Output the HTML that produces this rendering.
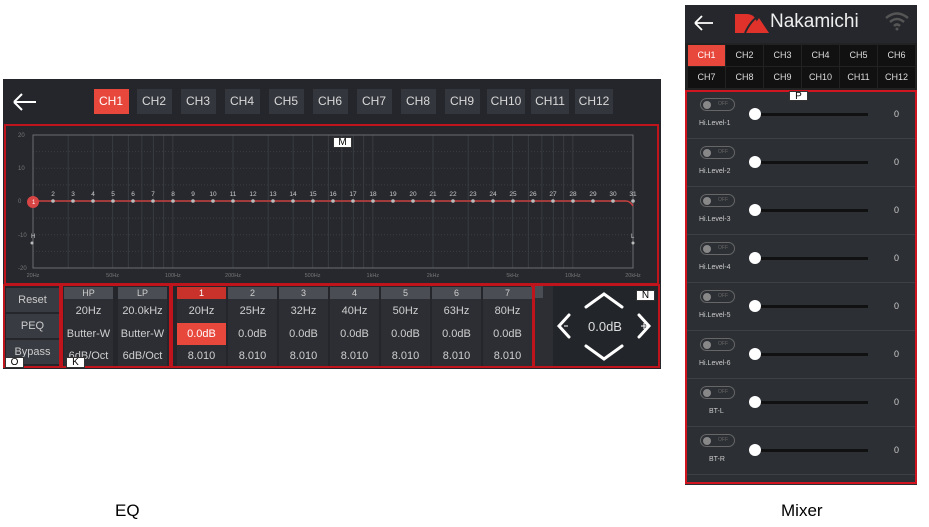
<!DOCTYPE html>
<html><head><meta charset="utf-8">
<style>
*{box-sizing:border-box;margin:0;padding:0}
body{width:929px;height:527px;background:#fff;font-family:"Liberation Sans",sans-serif;position:relative;overflow:hidden}
.a{position:absolute}
.ch{position:absolute;top:89px;height:25px;background:#33363c;color:#d8d8d8;font-size:12px;line-height:25px;text-align:center}
.col{position:absolute;top:287px;width:49px;height:79px;background:#2c2e33}
.col div{position:absolute;left:0;width:49px;text-align:center;color:#cfcfcf;font-size:11px}
.hd{top:0;height:12px;line-height:12px;background:#4a4d53;font-size:9px!important}
.btn{position:absolute;left:6px;width:53px;height:24px;background:#383b41;color:#ccc;font-size:11px;text-align:center;line-height:24px}
.mc{position:absolute;width:37px;height:21px;background:#111;color:#ddd;font-size:9px;text-align:center;line-height:21px}
.lab{position:absolute;background:#fff;color:#000;font-size:10px;line-height:10px;text-align:center;border:1px solid #333}
</style></head><body>
<div class="a" style="left:3px;top:79px;width:658px;height:290px;background:#24262b"></div>
<svg class="a" style="left:10px;top:90px" width="30" height="24"><path d="M4 12H26M4 12L12 4M4 12L12 20" stroke="#fff" stroke-width="2" fill="none"/></svg>
<div id="chs"></div>
<div class="a" style="left:4px;top:124px;width:655px;height:161px;border:2px solid #c0141c;background:#26282d"></div>
<svg class="a" style="left:0;top:124px" width="660" height="161" id="g"></svg>
<div class="a" style="left:3px;top:284px;width:58px;height:84px;border:2px solid #c0141c"></div>
<div class="btn" style="top:288px">Reset</div>
<div class="btn" style="top:314px">PEQ</div>
<div class="btn" style="top:340px">Bypass</div>
<div class="a" style="left:61px;top:284px;width:110px;height:84px;border:2px solid #c0141c"></div>
<div class="a" style="left:171px;top:284px;width:362px;height:84px;border:2px solid #c0141c"></div>
<div class="a" style="left:533px;top:284px;width:127px;height:84px;border:2px solid #c0141c"></div>
<div class="a" style="left:535px;top:286px;width:18px;height:80px;background:#2c2e33"></div>
<div class="a" style="left:535px;top:286px;width:8px;height:12px;background:#4a4d53"></div>
<div class="a" style="left:553px;top:286px;width:105px;height:80px;background:#22252a"></div>
<div id="cols"></div>
<svg class="a" style="left:553px;top:286px" width="105" height="80">
<path d="M33 21L51 8L69 21M33 60L51 73L69 60M16 29L6 40L16 51M86 29L96 40L86 51" stroke="#fff" stroke-width="3" fill="none" stroke-linecap="round"/>
<path d="M11 40h4M88 40h6M91 37v6" stroke="#fff" stroke-width="1"/>
<text x="52" y="45" fill="#ddd" font-size="13" text-anchor="middle" font-family="Liberation Sans">0.0dB</text>
</svg>
<div class="lab" style="left:333px;top:137px;width:19px;height:11px">M</div>
<div class="lab" style="left:636px;top:290px;width:19px;height:11px">N</div>
<div class="lab" style="left:5px;top:357px;width:19px;height:11px">O</div>
<div class="lab" style="left:66px;top:357px;width:19px;height:11px">K</div>
<div class="a" style="left:685px;top:5px;width:232px;height:480px;background:#2c2f34"></div>
<div class="a" style="left:685px;top:5px;width:232px;height:38px;background:#25272c"></div>
<svg class="a" style="left:692px;top:12px" width="24" height="22"><path d="M3 11H21M3 11L10 4M3 11L10 18" stroke="#fff" stroke-width="1.8" fill="none"/></svg>
<svg class="a" style="left:733px;top:12px" width="40" height="22"><path d="M2 21V2H14A10 10 0 0 1 24 12V21Z" fill="#e0322b"/><path d="M16 21L26 6L36 21Z" fill="#e0322b"/><path d="M12 21Q18 8 26 4" stroke="#25272c" stroke-width="2" fill="none"/></svg>
<div class="a" style="left:770px;top:10px;color:#eee;font-size:19px;line-height:24px">Nakamichi</div>
<svg class="a" style="left:884px;top:12px" width="26" height="20"><path d="M2 6Q13 -3 24 6M6 10Q13 4 20 10M10 14Q13 11 16 14" stroke="#555" stroke-width="2.5" fill="none"/><circle cx="13" cy="17" r="1.5" fill="#555"/></svg>
<div class="a" style="left:685px;top:43px;width:232px;height:47px;background:#222"></div>
<div id="mch"></div>
<div class="a" style="left:685px;top:90px;width:232px;height:394px;border:2px solid #d01520"></div>
<div id="rows"></div>
<div class="lab" style="left:789px;top:91px;width:19px;height:10px">P</div>
<div class="a" style="left:115px;top:501px;font-size:17px;color:#000">EQ</div>
<div class="a" style="left:781px;top:501px;font-size:17px;color:#000">Mixer</div>
<script>
var h='';var cx=[111,154,198,242,286,330,374,418,462,506,550,594];
cx.forEach(function(c,i){var w=i>8?38:35;h+='<div class="ch" style="left:'+(c-w/2)+'px;width:'+w+'px;'+(i==0?'background:#e8473c;color:#fff':'')+'">CH'+(i+1)+'</div>'});
document.getElementById('chs').innerHTML=h;
var s='',X0=33,W=600,T=11,B=144;
function fx(f){return X0+200*Math.log10(f/20)}
var fs=[30,40,50,60,70,80,90,100,200,300,400,500,600,700,800,900,1000,2000,3000,4000,5000,6000,7000,8000,9000,10000];
fs.forEach(function(f){var x=fx(f).toFixed(1);s+='<line x1="'+x+'" y1="'+T+'" x2="'+x+'" y2="'+B+'" stroke="#383b40" stroke-width="1"/>'});
for(var k=1;k<8;k++){var y=T+k*(B-T)/8;s+='<line x1="'+X0+'" y1="'+y+'" x2="'+(X0+W)+'" y2="'+y+'" stroke="#3a3d42" stroke-dasharray="1,2"/>'}
s+='<rect x="'+X0+'" y="'+T+'" width="'+W+'" height="'+(B-T)+'" fill="none" stroke="#6a6d72"/>';
[['20',T],['10',T+33],['0',T+66],['-10',T+100],['-20',B]].forEach(function(a){s+='<text x="18" y="'+(a[1]+2)+'" fill="#777" font-size="6">'+a[0]+'</text>'});
[['20Hz',20],['50Hz',50],['100Hz',100],['200Hz',200],['500Hz',500],['1kHz',1000],['2kHz',2000],['5kHz',5000],['10kHz',10000],['20kHz',20000]].forEach(function(a){s+='<text x="'+fx(a[1])+'" y="'+(B+9)+'" fill="#777" font-size="5.5" text-anchor="middle">'+a[0]+'</text>'});
var y0=T+66;
s+='<path d="M33 '+y0+'L626 '+y0+'Q630 '+y0+' 633 '+(y0+5)+'" stroke="#c84040" stroke-width="1.5" fill="none"/>';
for(var i=2;i<=31;i++){var x=33+(i-1)*20;s+='<circle cx="'+x+'" cy="'+y0+'" r="1.8" fill="#bbb"/><text x="'+x+'" y="'+(y0-5)+'" fill="#ccc" font-size="6.5" text-anchor="middle">'+i+'</text>'}
s+='<circle cx="33" cy="'+(y0+1)+'" r="6" fill="#d84545"/><text x="32" y="'+(y0+3)+'" fill="#fff" font-size="6">1</text>';
s+='<text x="31" y="'+(y0+37)+'" fill="#ccc" font-size="6">H</text><circle cx="32" cy="'+(y0+42)+'" r="1.5" fill="#bbb"/>';
s+='<text x="631" y="'+(y0+37)+'" fill="#ccc" font-size="6">L</text><circle cx="633" cy="'+(y0+42)+'" r="1.5" fill="#bbb"/>';
document.getElementById('g').innerHTML=s;
var c='';
function col(x,hd,a,b,d,red){c+='<div class="col" style="left:'+x+'px"><div class="hd" style="'+(red?'background:#c8322a;color:#fff':'')+'">'+hd+'</div><div style="top:13px;line-height:22px">'+a+'</div><div style="top:36px;height:22px;line-height:22px;'+(red?'background:#e8473c;color:#fff':'')+'">'+b+'</div><div style="top:59px;line-height:20px">'+d+'</div></div>'}
col(64,'HP','20Hz','Butter-W','6dB/Oct');col(118,'LP','20.0kHz','Butter-W','6dB/Oct');
['20Hz','25Hz','32Hz','40Hz','50Hz','63Hz','80Hz'].forEach(function(f,i){col(177+i*51,i+1,f,'0.0dB','8.010',i==0)});
document.getElementById('cols').innerHTML=c;
var m='';for(var i=0;i<12;i++){var r=Math.floor(i/6),k=i%6;m+='<div class="mc" style="left:'+(688+k*38)+'px;top:'+(45+r*22)+'px;'+(i==0?'background:#e8473c;color:#fff':'')+'">CH'+(i+1)+'</div>'}
document.getElementById('mch').innerHTML=m;
var L=['Hi.Level-1','Hi.Level-2','Hi.Level-3','Hi.Level-4','Hi.Level-5','Hi.Level-6','BT-L','BT-R'],R='';
L.forEach(function(t,i){var y=92+i*48;R+='<div class="a" style="left:687px;top:'+y+'px;width:228px;height:47px;border-bottom:1px solid #3d4046"></div>'+
'<div class="a" style="left:700px;top:'+(y+6)+'px;width:35px;height:13px;border:1px solid #666;border-radius:7px"><div class="a" style="left:2px;top:2px;width:8px;height:8px;border-radius:4px;background:#888"></div><div class="a" style="left:17px;top:2px;font-size:5px;color:#666">OFF</div></div>'+
'<div class="a" style="left:'+(i>5?709:699)+'px;top:'+(y+28)+'px;font-size:7px;color:#ccc">'+t+'</div>'+
'<div class="a" style="left:754px;top:'+(y+21)+'px;width:114px;height:3px;background:#111"></div>'+
'<div class="a" style="left:749px;top:'+(y+16)+'px;width:12px;height:12px;border-radius:6px;background:#fff"></div>'+
'<div class="a" style="left:894px;top:'+(y+17)+'px;font-size:9px;color:#ccc">0</div>'});
document.getElementById('rows').innerHTML=R;
</script>
</body></html>
